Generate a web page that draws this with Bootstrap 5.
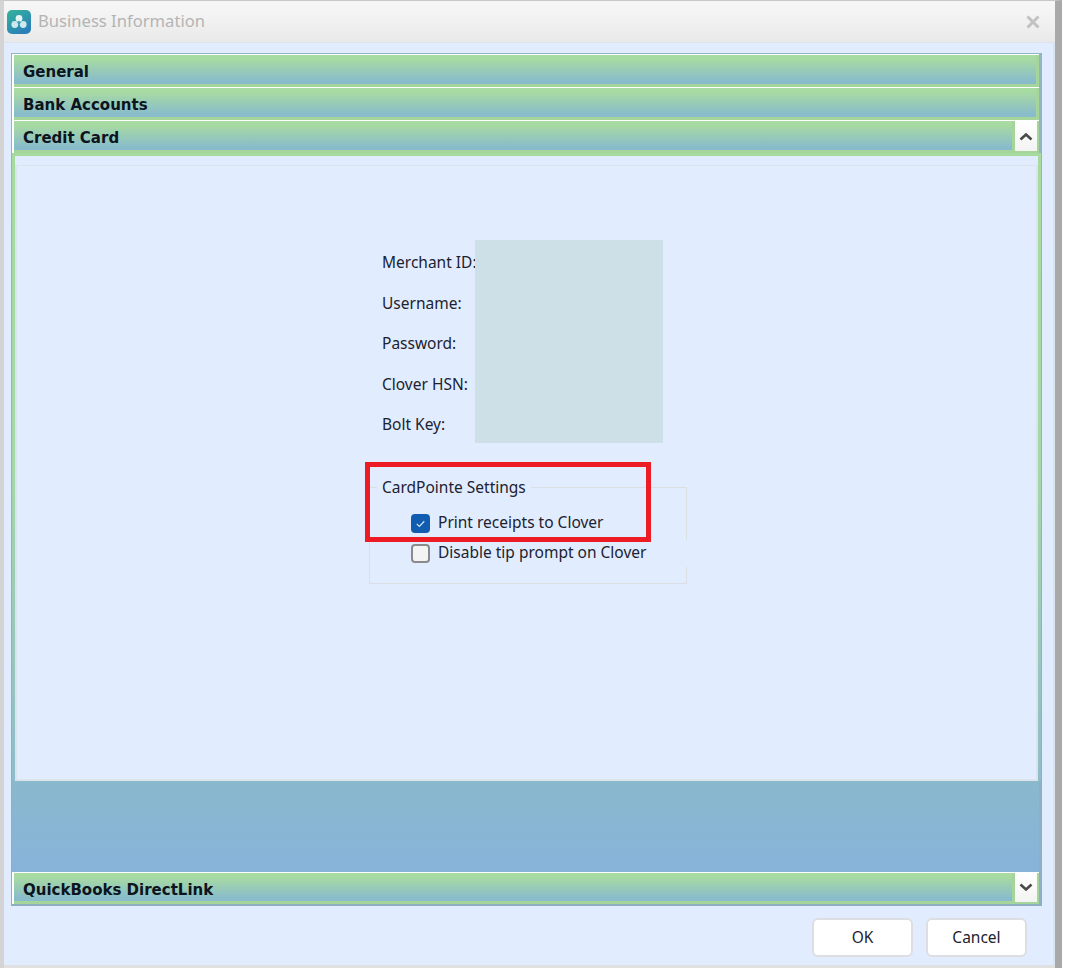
<!DOCTYPE html>
<html lang="en">
<head>
<meta charset="utf-8">
<title>Business Information</title>
<link rel="stylesheet" href="https://cdn.jsdelivr.net/npm/bootstrap@5.3.0/dist/css/bootstrap.min.css">
<style>
html, body { background: #fff; margin: 0; }
body { font-family: "Noto Sans", "Liberation Sans", sans-serif; color: #1c2230; font-size: 15.5px; }
.dlg { width: 1062px; height: 968px; background: #e0e0e0; border-left: 4px solid #d4d4d4; border-right: 7px solid #a9a9a9; border-top: 1px solid #c8c8c8; padding-bottom: 3px; }
.dlg-title { height: 41px; padding: 0 15px 0 3px; background: linear-gradient(#f6f6f6 0, #f4f4f4 12px, #e9e9e9 100%); }
.dlg-title span { font-size: 16.6px; color: #b4b4b4; margin-left: 7px; }
.dlg-main { height: 923px; background: #e1edff; padding: 10px 13px 0 7px; border: 1px solid #dbe3ec; border-width: 1px 2px 0 0; }
.acc { width: 1031px; height: 853px; background: linear-gradient(#90b7c0, #8cb0c0); padding: 1px 3px 2px 1px; }
.sect { height: 33px; padding-top: 1px; background: #fff; padding-left: 2px; }
.sect-bar { height: 100%; padding: 3px 0 0 9px; font-family: "DejaVu Sans", sans-serif; font-weight: 700; font-size: 15px; color: #0c1420; background: linear-gradient(#a9dca2 0, #a7daa2 15%, #89bccb 90%); border-bottom: 3px solid #a5d59b; border-right: 3px solid #a5d59b; line-height: 28px; }
.sect-tog { width: 24px; height: 100%; background: linear-gradient(#fff, #f2f4f2); border-right: 2px solid #a5d59b; border-bottom: 2px solid #a5d59b; }
.pane-wrap { height: 628px; margin-right: -2px; padding: 3px 3px 0 3px; background: linear-gradient(#a6dba0 0, #a4d8a8 50%, #8fbccb 100%); }
.pane-top { height: 9px; background: #e1edff; }
.pane-in { height: 616px; background: #e1edff; border: 2px solid #dbe4ea; border-top-width: 1px; position: relative; padding-top: 74px; padding-left: 352px; }
.fld-row { height: 40.5px; padding-top: 11px; }
.fld-labels { width: 106px; padding-left: 13px; height: 203px; white-space: nowrap; }
.redact { width: 188px; height: 203px; background: #cddfe7; }
.set-box { width: 318px; height: 97px; margin-top: 44px; border: 1px solid #d9dfe3; padding: 20px 0 0 41px; position: relative; }
.set-legend { position: absolute; top: -11px; left: 7px; padding: 0 5px; background: #e1edff; line-height: 20px; }
.set-gap { position: absolute; right: -1px; top: 52px; width: 2px; height: 27px; background: #e1edff; }
.opt { height: 30px; gap: 8px; }
.opt .form-check-input { width: 19px; height: 19px; margin: 0; border-radius: 4px; background-color: #f3f3f3; border: 2px solid #8a8a8a; flex: none; }
.opt .form-check-input:checked { background-color: #0f5cb0; border-color: #0f5cb0; --bs-form-check-bg-image: url("data:image/svg+xml,%3csvg xmlns='http://www.w3.org/2000/svg' viewBox='0 0 20 20'%3e%3cpath fill='none' stroke='%23d5e4f5' stroke-width='1.6' d='M5 10.5l3.5 3.5 6.5-7'/%3e%3c/svg%3e"); }
.red-mark { position: absolute; left: 348px; top: 296px; width: 286px; height: 80px; border: 5px solid #ed1c24; pointer-events: none; }
.gap-area { height: 91px; background: linear-gradient(#8ab8cc, #88b3da); }
.sect-last { height: 32px; }
.dlg-foot { padding-top: 12px; gap: 13px; padding-right: 13px; }
.dlg-btn { width: 101px; height: 39px; padding: 0; background: #fff; border: 2px solid #dcdee2; border-radius: 6px; font-size: 15.5px; color: #1c2230; }
</style>
</head>
<body>
<div class="dlg">
  <div class="dlg-title d-flex align-items-center">
    <svg width="24" height="24" viewBox="0 0 24 24" aria-hidden="true">
      <defs><linearGradient id="lg" x1="0" y1="0" x2="0.6" y2="1"><stop offset="0" stop-color="#35b59a"/><stop offset="1" stop-color="#2a7fb8"/></linearGradient></defs>
      <rect width="24" height="24" rx="5" fill="url(#lg)"/>
      <circle cx="12" cy="8.5" r="3.4" fill="#e4f3f3"/><circle cx="7.8" cy="14.5" r="3.4" fill="#cfe8ee"/><circle cx="16.2" cy="14.5" r="3.4" fill="#cfe8ee"/><circle cx="12" cy="12.5" r="1.6" fill="#3a9fb0"/>
    </svg>
    <span>Business Information</span>
    <svg class="ms-auto" width="14" height="14" viewBox="0 0 14 14" aria-hidden="true"><path d="M1.5 1.5l11 11M12.5 1.5l-11 11" stroke="#c2c2c2" stroke-width="3" fill="none"/></svg>
  </div>
  <div class="dlg-main">
    <div class="acc">
      <div class="sect"><div class="sect-bar">General</div></div>
      <div class="sect"><div class="sect-bar">Bank Accounts</div></div>
      <div class="sect d-flex">
        <div class="sect-bar flex-grow-1">Credit Card</div>
        <div class="sect-tog d-flex align-items-center justify-content-center"><svg width="14" height="9" viewBox="0 0 14 9" aria-hidden="true"><path d="M1.5 7.5L7 2.5l5.5 5" stroke="#4a4a4a" stroke-width="2.6" fill="none"/></svg></div>
      </div>
      <div class="pane-wrap">
        <div class="pane-top"></div>
        <div class="pane-in">
          <div class="d-flex">
            <div class="fld-labels">
              <div class="fld-row">Merchant ID:</div>
              <div class="fld-row">Username:</div>
              <div class="fld-row">Password:</div>
              <div class="fld-row">Clover HSN:</div>
              <div class="fld-row">Bolt Key:</div>
            </div>
            <div class="redact"></div>
          </div>
          <div class="set-box">
            <div class="set-legend">CardPointe Settings</div>
            <div class="set-gap"></div>
            <div class="opt d-flex align-items-center"><input class="form-check-input" type="checkbox" checked aria-label="Print receipts to Clover"><span>Print receipts to Clover</span></div>
            <div class="opt d-flex align-items-center"><input class="form-check-input" type="checkbox" aria-label="Disable tip prompt on Clover"><span>Disable tip prompt on Clover</span></div>
          </div>
          <div class="red-mark"></div>
        </div>
      </div>
      <div class="gap-area"></div>
      <div class="sect sect-last d-flex">
        <div class="sect-bar flex-grow-1">QuickBooks DirectLink</div>
        <div class="sect-tog d-flex align-items-center justify-content-center"><svg width="14" height="9" viewBox="0 0 14 9" aria-hidden="true"><path d="M1.5 1.5L7 6.5l5.5-5" stroke="#4a4a4a" stroke-width="2.6" fill="none"/></svg></div>
      </div>
    </div>
    <div class="dlg-foot d-flex justify-content-end">
      <button type="button" class="btn dlg-btn">OK</button>
      <button type="button" class="btn dlg-btn">Cancel</button>
    </div>
  </div>
</div>
<script src="https://cdn.jsdelivr.net/npm/bootstrap@5.3.0/dist/js/bootstrap.bundle.min.js"></script>
</body>
</html>
